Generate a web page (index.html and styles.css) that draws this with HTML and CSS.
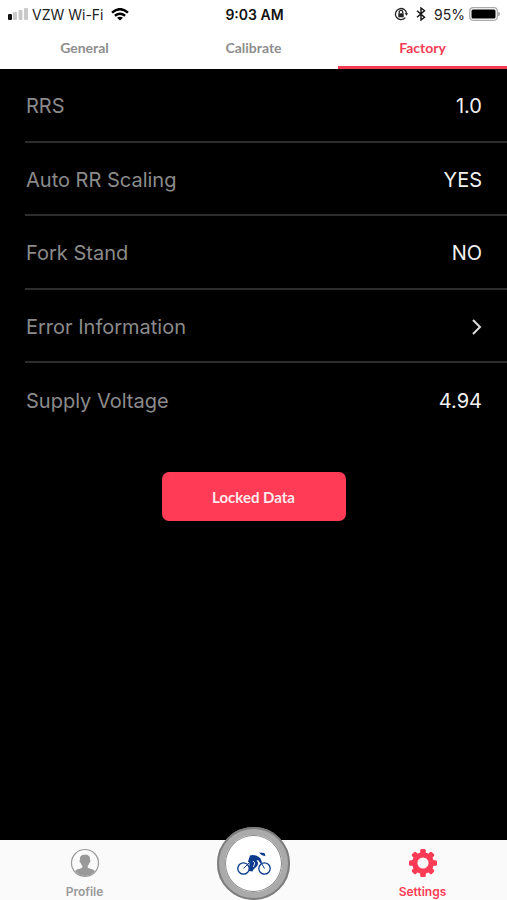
FILE: index.html
```html
<!DOCTYPE html>
<html lang="en">
<head>
<meta charset="utf-8">
<meta name="viewport" content="width=device-width, initial-scale=1">
<title>Factory Settings</title>
<link rel="stylesheet" href="styles.css">
</head>
<body>
<header class="status">
  <div class="status-left">
    <svg class="signal" width="20" height="12" viewBox="0 0 20 12" aria-hidden="true">
      <rect x="0" y="6" width="4" height="6" rx="1" fill="#111"/>
      <g fill="#c9c9c9"><rect x="5" y="4" width="4" height="8" rx="1"/><rect x="10.500" y="2" width="4" height="10" rx="1"/><rect x="16" y="0" width="4" height="12" rx="1"/></g>
    </svg>
    <span>VZW Wi-Fi</span>
    <svg class="wifi" width="18" height="13" viewBox="0 0 18 13" fill="none" stroke="#000" stroke-width="2.500" aria-hidden="true">
      <path d="M1 4.600Q9 -2.200 17 4.600"/><path d="M3.900 7.800Q9 3.600 14.100 7.800"/><path d="M9 12.600L6 9.800Q9 7.600 12 9.800Z" fill="#000" stroke="none"/>
    </svg>
  </div>
  <time class="clock">9:03 AM</time>
  <div class="status-right">
    <svg width="14" height="14" viewBox="0 0 14 14" fill="none" stroke="#222" stroke-width="1.300" aria-hidden="true">
      <path d="M11.300 10.700A5.600 5.600 0 1 1 12.600 7"/><path d="M10.700 6.300H14L12.500 8.800Z" fill="#222" stroke="none"/>
      <rect x="4.300" y="6.300" width="5.400" height="4" fill="#222" stroke="none"/><path d="M5.200 6.500V5.200a1.800 1.800 0 0 1 3.600 0V6.500"/>
    </svg>
    <svg class="bluetooth" width="10" height="14" viewBox="0 0 10 14" fill="none" stroke="#111" stroke-width="1.400" aria-hidden="true">
      <path d="M1 3.700L8.500 10.200L5 13V1L8.500 3.800L1 10.300"/>
    </svg>
    <span>95%</span>
    <svg class="battery" width="32" height="14" viewBox="0 0 32 14" aria-hidden="true">
      <rect x=".7" y=".7" width="27.600" height="12.600" rx="3.500" fill="#fff" stroke="#aaa" stroke-width="1.200"/><rect x="2.500" y="2.500" width="24" height="9" rx="1.500"/><path d="M29.700 5q1.500 2 0 4z" fill="#aaa" stroke="#aaa"/>
    </svg>
  </div>
</header>
<nav class="tabs" aria-label="Settings sections">
  <a href="#general">General</a>
  <a href="#calibrate">Calibrate</a>
  <a href="#factory" class="active" aria-current="page">Factory</a>
</nav>
<main>
  <ul class="settings">
    <li><span>RRS</span><span class="value">1.0</span></li>
    <li><span>Auto RR Scaling</span><span class="value">YES</span></li>
    <li><span>Fork Stand</span><span class="value">NO</span></li>
    <li><a class="row-link" href="#errors"><span>Error Information</span>
      <svg width="11" height="18" viewBox="0 0 11 18" fill="none" stroke="#ddd" stroke-width="2" aria-hidden="true"><path d="M2 2L9 9L2 16"/></svg></a></li>
    <li><span>Supply Voltage</span><span class="value">4.94</span></li>
  </ul>
  <button class="locked" type="button">Locked Data</button>
</main>
<nav class="bottom" aria-label="Main">
  <a href="#profile">
    <svg width="30" height="30" viewBox="0 0 30 30" aria-hidden="true">
      <circle cx="15" cy="15" r="13.500" fill="none" stroke="#999" stroke-width="1.200"/>
      <path fill="#999" d="M15 6.800c-4 0-5.500 2-5 5-.8.300-.5 2.600.5 3 .3 1.300 1 2.300 1.800 3v1.600c-1.500 1.300-5.500 1.400-7.200 3.700A12.600 12.600 0 0 0 15 28a12.600 12.600 0 0 0 9.900-4.900c-1.700-2.300-5.700-2.400-7.200-3.700v-1.600c.8-.7 1.500-1.700 1.800-3 1-.4 1.300-2.700.5-3 .5-3-1-5-5-5z"/>
    </svg>
    <span>Profile</span>
  </a>
  <a class="ride" href="#ride" aria-label="Ride">
    <svg width="36" height="24" viewBox="0 0 36 24" fill="none" stroke="#0b3a8c" aria-hidden="true">
      <circle cx="7.500" cy="16.500" r="5.700" stroke-width="1.300"/><circle cx="28.500" cy="16.500" r="5.700" stroke-width="1.300"/>
      <path d="M7.500 16.500L13 11M25 10.500L28.500 16.500" stroke-width="1"/>
      <path d="M12 9.500L14 3.500C17 2 22 3.500 24.500 6.500L26 10.500L24.500 11.500L22.500 8.500L20.500 8C23 11 22 13.500 19.500 15.500L17 18L16.500 19.500L13 19L13.500 11Z" fill="#0b3a8c" stroke="none"/>
      <path d="M16.800 9L18.800 11L17.300 15" stroke="#fff" stroke-width=".9"/>
      <path d="M23 .5L28.500 1L29.500 4.200L25.500 3Z" fill="#0b3a8c" stroke="none"/>
    </svg>
  </a>
  <a href="#settings" class="active" aria-current="page">
    <svg width="30" height="30" viewBox="0 0 30 30" aria-hidden="true">
      <g fill="#ff3b55"><g id="teeth"><rect x="12.200" y="1" width="5.600" height="28" rx="1.500"/><rect x="1" y="12.200" width="28" height="5.600" rx="1.500"/></g><use href="#teeth" transform="rotate(45 15 15)"/><circle cx="15" cy="15" r="10.800"/></g>
      <circle cx="15" cy="15" r="5.600" fill="#fafafa"/>
    </svg>
    <span>Settings</span>
  </a>
</nav>
</body>
</html>
```
FILE: styles.css
```css
* { box-sizing: border-box; }

body {
  margin: 0;
  min-height: 100vh;
  display: flex;
  flex-direction: column;
  background: #000;
  font-family: Inter, "Liberation Sans", sans-serif;
}

a { color: inherit; text-decoration: none; }

.status {
  display: grid;
  grid-template-columns: 1fr auto 1fr;
  align-items: center;
  height: 28px;
  padding: 0 6px 0 8px;
  background: #fff;
  color: #222;
  font-size: 14px;
}

.status-left, .status-right { display: flex; align-items: center; gap: 4px; }
.status-right { justify-content: flex-end; }
.wifi { margin-left: 4px; }
.bluetooth { margin: 0 4px; }
.clock { color: #111; font-weight: 600; }

.tabs {
  display: grid;
  grid-template-columns: repeat(3, 1fr);
  height: 41px;
  background: #fff;
  color: #8e8e8e;
  font: 700 14px/40px Lato, sans-serif;
  text-align: center;
}

.tabs .active { color: #f33c54; box-shadow: inset 0 -3px #f33c54; }

main {
  flex: 1;
  display: flex;
  flex-direction: column;
  align-items: center;
}

.settings {
  align-self: stretch;
  display: grid;
  grid-template-rows: repeat(5, 1fr);
  height: 368px;
  margin: 0 0 0 25px;
  padding: 0;
  list-style: none;
  color: #8b8b8b;
  font-size: 20px;
}

.settings li {
  display: flex;
  align-items: center;
  justify-content: space-between;
  padding: 3px 25px 0 1px;
  border-bottom: 2px solid #2e2e2e;
}

.settings li:last-child { border-bottom-color: transparent; }
.row-link { flex: 1; display: flex; align-items: center; justify-content: space-between; }
.value { color: #f2f2f2; }

.locked {
  width: 184px;
  height: 49px;
  margin-top: 35px;
  border: 0;
  border-radius: 7px;
  background: #ff3b55;
  color: #ffe9ec;
  font: 700 15px Lato, sans-serif;
}

.bottom {
  display: grid;
  grid-template-columns: repeat(3, 1fr);
  grid-template-rows: 60px;
  background: #fafafa;
  color: #999;
  font-size: 12px;
  font-weight: 600;
  line-height: 16px;
}

.bottom a {
  display: flex;
  flex-direction: column;
  align-items: center;
  justify-content: flex-end;
  gap: 6px;
}

.bottom .active { color: #ff3b55; }

.bottom .ride {
  align-self: end;
  justify-self: center;
  justify-content: center;
  width: 73px;
  height: 73px;
  border: 8px solid #aaa;
  border-radius: 50%;
  background: #fff;
  box-shadow: inset 0 0 0 1px #888;
  outline: 2px solid #7d7d7d;
  outline-offset: -2px;
}
```
